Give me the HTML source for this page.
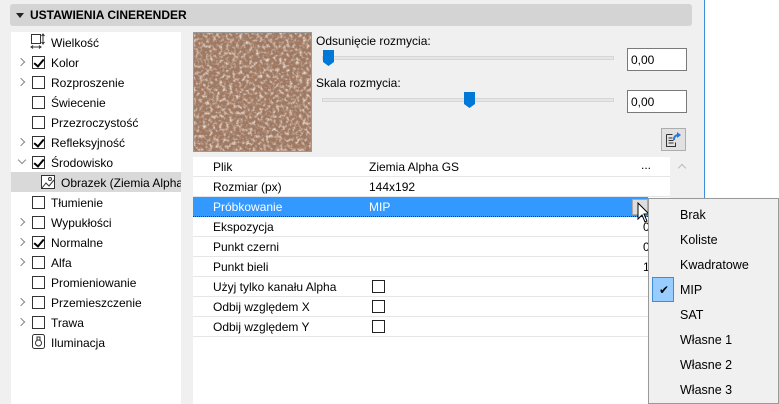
<!DOCTYPE html>
<html><head><meta charset="utf-8"><style>
*{margin:0;padding:0;box-sizing:border-box}
body{width:779px;height:404px;overflow:hidden;background:#f0f0f0;font-family:"Liberation Sans",sans-serif;font-size:12px;color:#000;position:relative}
.a{position:absolute}
.cb{position:absolute;width:13px;height:13px;border:1px solid #333;background:#fff}
.cb.c::after{content:"";position:absolute;left:3px;top:0px;width:4px;height:8px;border:solid #000;border-width:0 2px 2px 0;transform:rotate(40deg)}
.chev{position:absolute;width:6px;height:6px;border:solid #888;border-width:0 1.5px 1.5px 0;transform:rotate(-45deg)}
.t{position:absolute;line-height:20px;white-space:nowrap;margin-top:1px}
.row{position:absolute;left:193px;width:477px;height:20px;border-bottom:1px solid #e6e6e6}
.mi{position:absolute;left:680px;line-height:25px;font-size:12.5px;margin-top:1px}
</style></head><body>
<div class="a" style="left:704px;top:0;width:1px;height:200px;background:#3c8ddc"></div>
<div class="a" style="left:705px;top:0;width:74px;height:404px;background:#fff"></div>
<div class="a" style="left:10px;top:4px;width:682px;height:22px;background:#d4d4d4;border-radius:3px"></div>
<div class="a" style="left:16px;top:13px;width:0;height:0;border-left:4px solid transparent;border-right:4px solid transparent;border-top:5px solid #222"></div>
<div class="t" style="left:30px;top:4px;font-weight:bold;font-size:12px">USTAWIENIA CINERENDER</div>

<div class="a" style="left:11px;top:32px;width:170px;height:372px;background:#fff"></div>
<div class="a" style="left:11px;top:172px;width:170px;height:20px;background:#d9d9d9"></div>
<svg class="a" style="left:30px;top:33px" width="16" height="16"><rect x="1.5" y="1.5" width="9" height="9" fill="none" stroke="#333"/><path d="M13 1v10M11.5 3l1.5-2 1.5 2M11.5 9l1.5 2 1.5-2M1 14h10M3 12.5l-2 1.5 2 1.5M9 12.5l2 1.5-2 1.5" stroke="#333" fill="none"/></svg>
<div class="t" style="left:51px;top:32px">Wielkość</div>
<div class="chev" style="left:18px;top:59px"></div><div class="cb c" style="left:32px;top:56px"></div><div class="t" style="left:51px;top:52px">Kolor</div>
<div class="chev" style="left:18px;top:79px"></div><div class="cb" style="left:32px;top:76px"></div><div class="t" style="left:51px;top:72px">Rozproszenie</div>
<div class="cb" style="left:32px;top:96px"></div><div class="t" style="left:51px;top:92px">Świecenie</div>
<div class="cb" style="left:32px;top:116px"></div><div class="t" style="left:51px;top:112px">Przezroczystość</div>
<div class="chev" style="left:18px;top:139px"></div><div class="cb c" style="left:32px;top:136px"></div><div class="t" style="left:51px;top:132px">Refleksyjność</div>
<div class="chev" style="left:19px;top:157px;transform:rotate(45deg)"></div><div class="cb c" style="left:32px;top:156px"></div><div class="t" style="left:51px;top:152px">Środowisko</div>
<svg class="a" style="left:41px;top:175px" width="14" height="14"><rect x="0.5" y="0.5" width="13" height="13" fill="#fff" stroke="#333"/><path d="M1 13l4-5 3 3 5-6" stroke="#333" fill="none"/><circle cx="9" cy="4" r="1.5" fill="none" stroke="#333"/></svg>
<div class="t" style="left:61px;top:172px;width:120px;overflow:hidden">Obrazek (Ziemia Alpha GS)</div>
<div class="cb" style="left:32px;top:196px"></div><div class="t" style="left:51px;top:192px">Tłumienie</div>
<div class="chev" style="left:18px;top:219px"></div><div class="cb" style="left:32px;top:216px"></div><div class="t" style="left:51px;top:212px">Wypukłości</div>
<div class="chev" style="left:18px;top:239px"></div><div class="cb c" style="left:32px;top:236px"></div><div class="t" style="left:51px;top:232px">Normalne</div>
<div class="chev" style="left:18px;top:259px"></div><div class="cb" style="left:32px;top:256px"></div><div class="t" style="left:51px;top:252px">Alfa</div>
<div class="cb" style="left:32px;top:276px"></div><div class="t" style="left:51px;top:272px">Promieniowanie</div>
<div class="chev" style="left:18px;top:299px"></div><div class="cb" style="left:32px;top:296px"></div><div class="t" style="left:51px;top:292px">Przemieszczenie</div>
<div class="chev" style="left:18px;top:319px"></div><div class="cb" style="left:32px;top:316px"></div><div class="t" style="left:51px;top:312px">Trawa</div>
<svg class="a" style="left:32px;top:334px" width="14" height="16"><rect x="0.5" y="0.5" width="12" height="14" rx="2" fill="#fff" stroke="#333"/><circle cx="6.5" cy="9" r="3" fill="none" stroke="#333"/><path d="M5 3h3v3h-3z" fill="none" stroke="#333"/></svg>
<div class="t" style="left:51px;top:332px">Iluminacja</div>

<svg class="a" style="left:193px;top:32px" width="119" height="120"><defs><filter id="n"><feTurbulence type="fractalNoise" baseFrequency="0.3" numOctaves="3" seed="3"/><feColorMatrix values="0 0 0 0 0.88  0 0 0 0 0.78  0 0 0 0 0.7  0 0 0 2.4 -1.1"/></filter><filter id="m"><feTurbulence type="fractalNoise" baseFrequency="0.4" numOctaves="2" seed="8"/><feColorMatrix values="0 0 0 0 0.28  0 0 0 0 0.18  0 0 0 0 0.14  0 0 0 2.4 -1.1"/></filter></defs><rect width="119" height="120" fill="#a27a62"/><rect width="119" height="120" filter="url(#m)"/><rect width="119" height="120" filter="url(#n)"/><rect x="0.5" y="0.5" width="118" height="119" fill="none" stroke="#999"/></svg>

<div class="t" style="left:316px;top:30px">Odsunięcie rozmycia:</div>
<div class="a" style="left:322px;top:56px;width:292px;height:4px;background:#e6e6e6;border:1px solid #d6d6d6"></div>
<svg class="a" style="left:323px;top:50px" width="11" height="16"><path d="M0 0h11v12l-5.5 4L0 12z" fill="#0078d7"/></svg>
<div class="a" style="left:627px;top:48px;width:60px;height:23px;background:#fff;border:1px solid #7a7a7a;padding:4px 0 0 3px">0,00</div>
<div class="t" style="left:316px;top:72px">Skala rozmycia:</div>
<div class="a" style="left:322px;top:98px;width:292px;height:4px;background:#e6e6e6;border:1px solid #d6d6d6"></div>
<svg class="a" style="left:464px;top:92px" width="11" height="16"><path d="M0 0h11v12l-5.5 4L0 12z" fill="#0078d7"/></svg>
<div class="a" style="left:627px;top:90px;width:60px;height:23px;background:#fff;border:1px solid #7a7a7a;padding:4px 0 0 3px">0,00</div>
<div class="a" style="left:661px;top:128px;width:25px;height:23px;background:#e1e1e1;border:1px solid #adadad"></div>
<svg class="a" style="left:665px;top:131px" width="18" height="18"><path d="M1.5 3.5h6M1.5 3.5v12h9v-4M3.5 7h4M3.5 9.5h5M3.5 12h5" stroke="#333" fill="none"/><path d="M9 9c0-4 2-5 5-5" stroke="#1e7be0" stroke-width="2" fill="none"/><path d="M12 1l4 3-4 3z" fill="#1e7be0"/></svg>

<div class="a" style="left:193px;top:157px;width:477px;height:247px;background:#fff"></div>
<div class="row" style="top:157px"></div><div class="t" style="left:213px;top:156px">Plik</div><div class="t" style="left:369px;top:156px">Ziemia Alpha GS</div><div class="t" style="left:641px;top:154px">...</div>
<div class="row" style="top:177px"></div><div class="t" style="left:213px;top:176px">Rozmiar (px)</div><div class="t" style="left:369px;top:176px">144x192</div>
<div class="a" style="left:193px;top:197px;width:455px;height:20px;background:#3399ff;border-bottom:1px dotted #333"></div>
<div class="t" style="left:213px;top:196px;color:#fff">Próbkowanie</div><div class="t" style="left:369px;top:196px;color:#fff">MIP</div>
<div class="a" style="left:632px;top:199px;width:16px;height:16px;background:#ddd;border:1px solid #aaa"></div>
<div class="row" style="top:217px"></div><div class="t" style="left:213px;top:216px">Ekspozycja</div><div class="t" style="left:643px;top:216px">0</div>
<div class="row" style="top:237px"></div><div class="t" style="left:213px;top:236px">Punkt czerni</div><div class="t" style="left:643px;top:236px">0</div>
<div class="row" style="top:257px"></div><div class="t" style="left:213px;top:256px">Punkt bieli</div><div class="t" style="left:643px;top:256px">1</div>
<div class="row" style="top:277px"></div><div class="t" style="left:213px;top:276px">Użyj tylko kanału Alpha</div><div class="cb" style="left:372px;top:280px;border-color:#222"></div>
<div class="row" style="top:297px"></div><div class="t" style="left:213px;top:296px">Odbij względem X</div><div class="cb" style="left:372px;top:300px;border-color:#222"></div>
<div class="row" style="top:317px"></div><div class="t" style="left:213px;top:316px">Odbij względem Y</div><div class="cb" style="left:372px;top:320px;border-color:#222"></div>
<div class="a" style="left:679px;top:165px;width:6px;height:6px;border:solid #bbb;border-width:1.5px 0 0 1.5px;transform:rotate(45deg)"></div>
<svg class="a" style="left:637px;top:202px" width="14" height="22"><path d="M1 1v16l4-4 3 7 2-1-3-7h5z" fill="#fff" stroke="#000"/></svg>

<div class="a" style="left:648px;top:198px;width:131px;height:206px;background:#f0f0f0;border:1px solid #999;box-shadow:2px 2px 3px rgba(0,0,0,.2)"></div>
<div class="a" style="left:652px;top:277px;width:22px;height:25px;background:#99ccff;border:1px solid #3c8ddc"></div>
<div class="a" style="left:659px;top:283px;font-size:12px">✔</div>
<div class="mi" style="top:202px">Brak</div>
<div class="mi" style="top:227px">Koliste</div>
<div class="mi" style="top:252px">Kwadratowe</div>
<div class="mi" style="top:277px">MIP</div>
<div class="mi" style="top:302px">SAT</div>
<div class="mi" style="top:327px">Własne 1</div>
<div class="mi" style="top:352px">Własne 2</div>
<div class="mi" style="top:377px">Własne 3</div>
</body></html>
